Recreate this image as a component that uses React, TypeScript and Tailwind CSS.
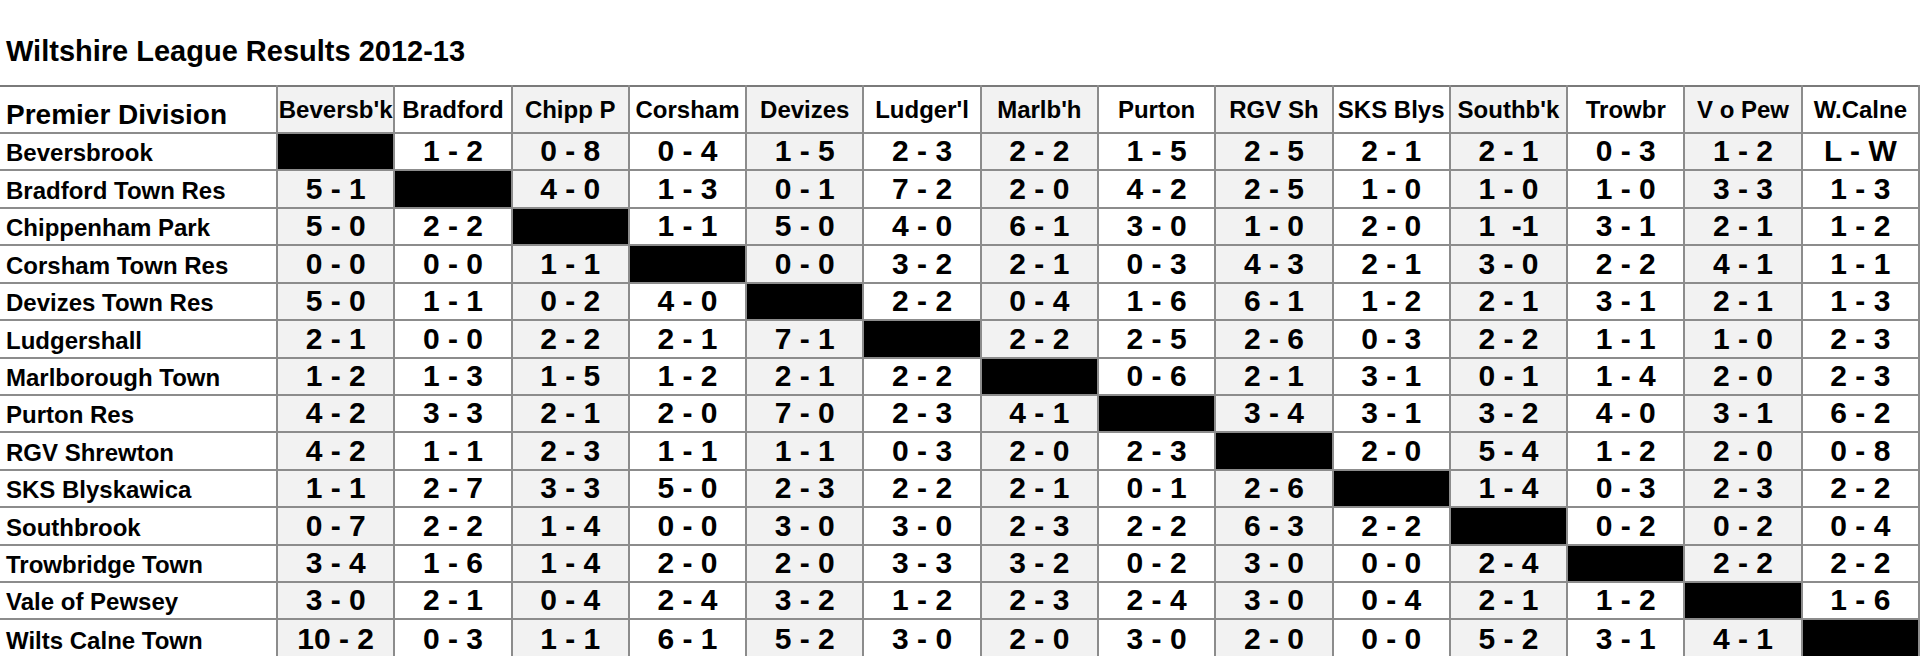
const columns = [
  "Beversb'k",
  "Bradford",
  "Chipp P",
  "Corsham",
  "Devizes",
  "Ludger'l",
  "Marlb'h",
  "Purton",
  "RGV Sh",
  "SKS Blys",
  "Southb'k",
  "Trowbr",
  "V o Pew",
  "W.Calne",
];

// "X" = team can't play itself (black cell)
const results: [string, string[]][] = [
  ["Beversbrook", ["X", "1 - 2", "0 - 8", "0 - 4", "1 - 5", "2 - 3", "2 - 2", "1 - 5", "2 - 5", "2 - 1", "2 - 1", "0 - 3", "1 - 2", "L - W"]],
  ["Bradford Town Res", ["5 - 1", "X", "4 - 0", "1 - 3", "0 - 1", "7 - 2", "2 - 0", "4 - 2", "2 - 5", "1 - 0", "1 - 0", "1 - 0", "3 - 3", "1 - 3"]],
  ["Chippenham Park", ["5 - 0", "2 - 2", "X", "1 - 1", "5 - 0", "4 - 0", "6 - 1", "3 - 0", "1 - 0", "2 - 0", "1  -1", "3 - 1", "2 - 1", "1 - 2"]],
  ["Corsham Town Res", ["0 - 0", "0 - 0", "1 - 1", "X", "0 - 0", "3 - 2", "2 - 1", "0 - 3", "4 - 3", "2 - 1", "3 - 0", "2 - 2", "4 - 1", "1 - 1"]],
  ["Devizes Town Res", ["5 - 0", "1 - 1", "0 - 2", "4 - 0", "X", "2 - 2", "0 - 4", "1 - 6", "6 - 1", "1 - 2", "2 - 1", "3 - 1", "2 - 1", "1 - 3"]],
  ["Ludgershall", ["2 - 1", "0 - 0", "2 - 2", "2 - 1", "7 - 1", "X", "2 - 2", "2 - 5", "2 - 6", "0 - 3", "2 - 2", "1 - 1", "1 - 0", "2 - 3"]],
  ["Marlborough Town", ["1 - 2", "1 - 3", "1 - 5", "1 - 2", "2 - 1", "2 - 2", "X", "0 - 6", "2 - 1", "3 - 1", "0 - 1", "1 - 4", "2 - 0", "2 - 3"]],
  ["Purton Res", ["4 - 2", "3 - 3", "2 - 1", "2 - 0", "7 - 0", "2 - 3", "4 - 1", "X", "3 - 4", "3 - 1", "3 - 2", "4 - 0", "3 - 1", "6 - 2"]],
  ["RGV Shrewton", ["4 - 2", "1 - 1", "2 - 3", "1 - 1", "1 - 1", "0 - 3", "2 - 0", "2 - 3", "X", "2 - 0", "5 - 4", "1 - 2", "2 - 0", "0 - 8"]],
  ["SKS Blyskawica", ["1 - 1", "2 - 7", "3 - 3", "5 - 0", "2 - 3", "2 - 2", "2 - 1", "0 - 1", "2 - 6", "X", "1 - 4", "0 - 3", "2 - 3", "2 - 2"]],
  ["Southbrook", ["0 - 7", "2 - 2", "1 - 4", "0 - 0", "3 - 0", "3 - 0", "2 - 3", "2 - 2", "6 - 3", "2 - 2", "X", "0 - 2", "0 - 2", "0 - 4"]],
  ["Trowbridge Town", ["3 - 4", "1 - 6", "1 - 4", "2 - 0", "2 - 0", "3 - 3", "3 - 2", "0 - 2", "3 - 0", "0 - 0", "2 - 4", "X", "2 - 2", "2 - 2"]],
  ["Vale of Pewsey", ["3 - 0", "2 - 1", "0 - 4", "2 - 4", "3 - 2", "1 - 2", "2 - 3", "2 - 4", "3 - 0", "0 - 4", "2 - 1", "1 - 2", "X", "1 - 6"]],
  ["Wilts Calne Town", ["10 - 2", "0 - 3", "1 - 1", "6 - 1", "5 - 2", "3 - 0", "2 - 0", "3 - 0", "2 - 0", "0 - 0", "5 - 2", "3 - 1", "4 - 1", "X"]],
];

export default function App() {
  return (
    <div className="w-[1920px] h-[656px] overflow-hidden bg-white text-black font-['Liberation_Sans',Arial,sans-serif]">
      <div className="h-[85px] pl-[6px] pt-[37px]">
        <h1 className="text-[29px] leading-[29px] font-bold">Wiltshire League Results 2012-13</h1>
      </div>

      <table className="w-[1920px] table-fixed border-collapse">
        <colgroup>
          <col className="w-[277px]" />
          {columns.map((c) => (
            <col key={c} />
          ))}
        </colgroup>
        <thead>
          <tr className="h-[47px] border-t-2 border-[#7a7a7a]">
            <th className="text-left align-bottom pl-[6px] pb-[3px] text-[28px] leading-[28px] font-bold whitespace-nowrap border-r-2 border-[#8c8c8c]">
              Premier Division
            </th>
            {columns.map((c, i) => (
              <th
                key={c}
                className={`align-bottom pb-[10px] text-[24px] leading-[24px] font-bold text-center whitespace-nowrap overflow-hidden border-r-2 border-[#8c8c8c] ${
                  i % 2 === 0 ? "bg-[#f2f2f2]" : "bg-white"
                }`}
              >
                {c}
              </th>
            ))}
          </tr>
        </thead>
        <tbody>
          {results.map(([team, scores]) => (
            <tr key={team} className="h-[37.43px] border-t-2 border-[#8c8c8c]">
              <td className="align-bottom pl-[6px] pb-[4px] text-[24px] leading-[24px] font-bold whitespace-nowrap border-r-2 border-[#8c8c8c]">
                {team}
              </td>
              {scores.map((s, i) =>
                s === "X" ? (
                  <td key={i} className="bg-black border-r-2 border-[#8c8c8c]" />
                ) : (
                  <td
                    key={i}
                    className={`align-bottom pb-[3px] text-center text-[30px] leading-[30px] font-bold whitespace-pre border-r-2 border-[#8c8c8c] ${
                      i % 2 === 0 ? "bg-[#f2f2f2]" : "bg-white"
                    }`}
                  >
                    {s}
                  </td>
                )
              )}
            </tr>
          ))}
        </tbody>
      </table>
    </div>
  );
}
